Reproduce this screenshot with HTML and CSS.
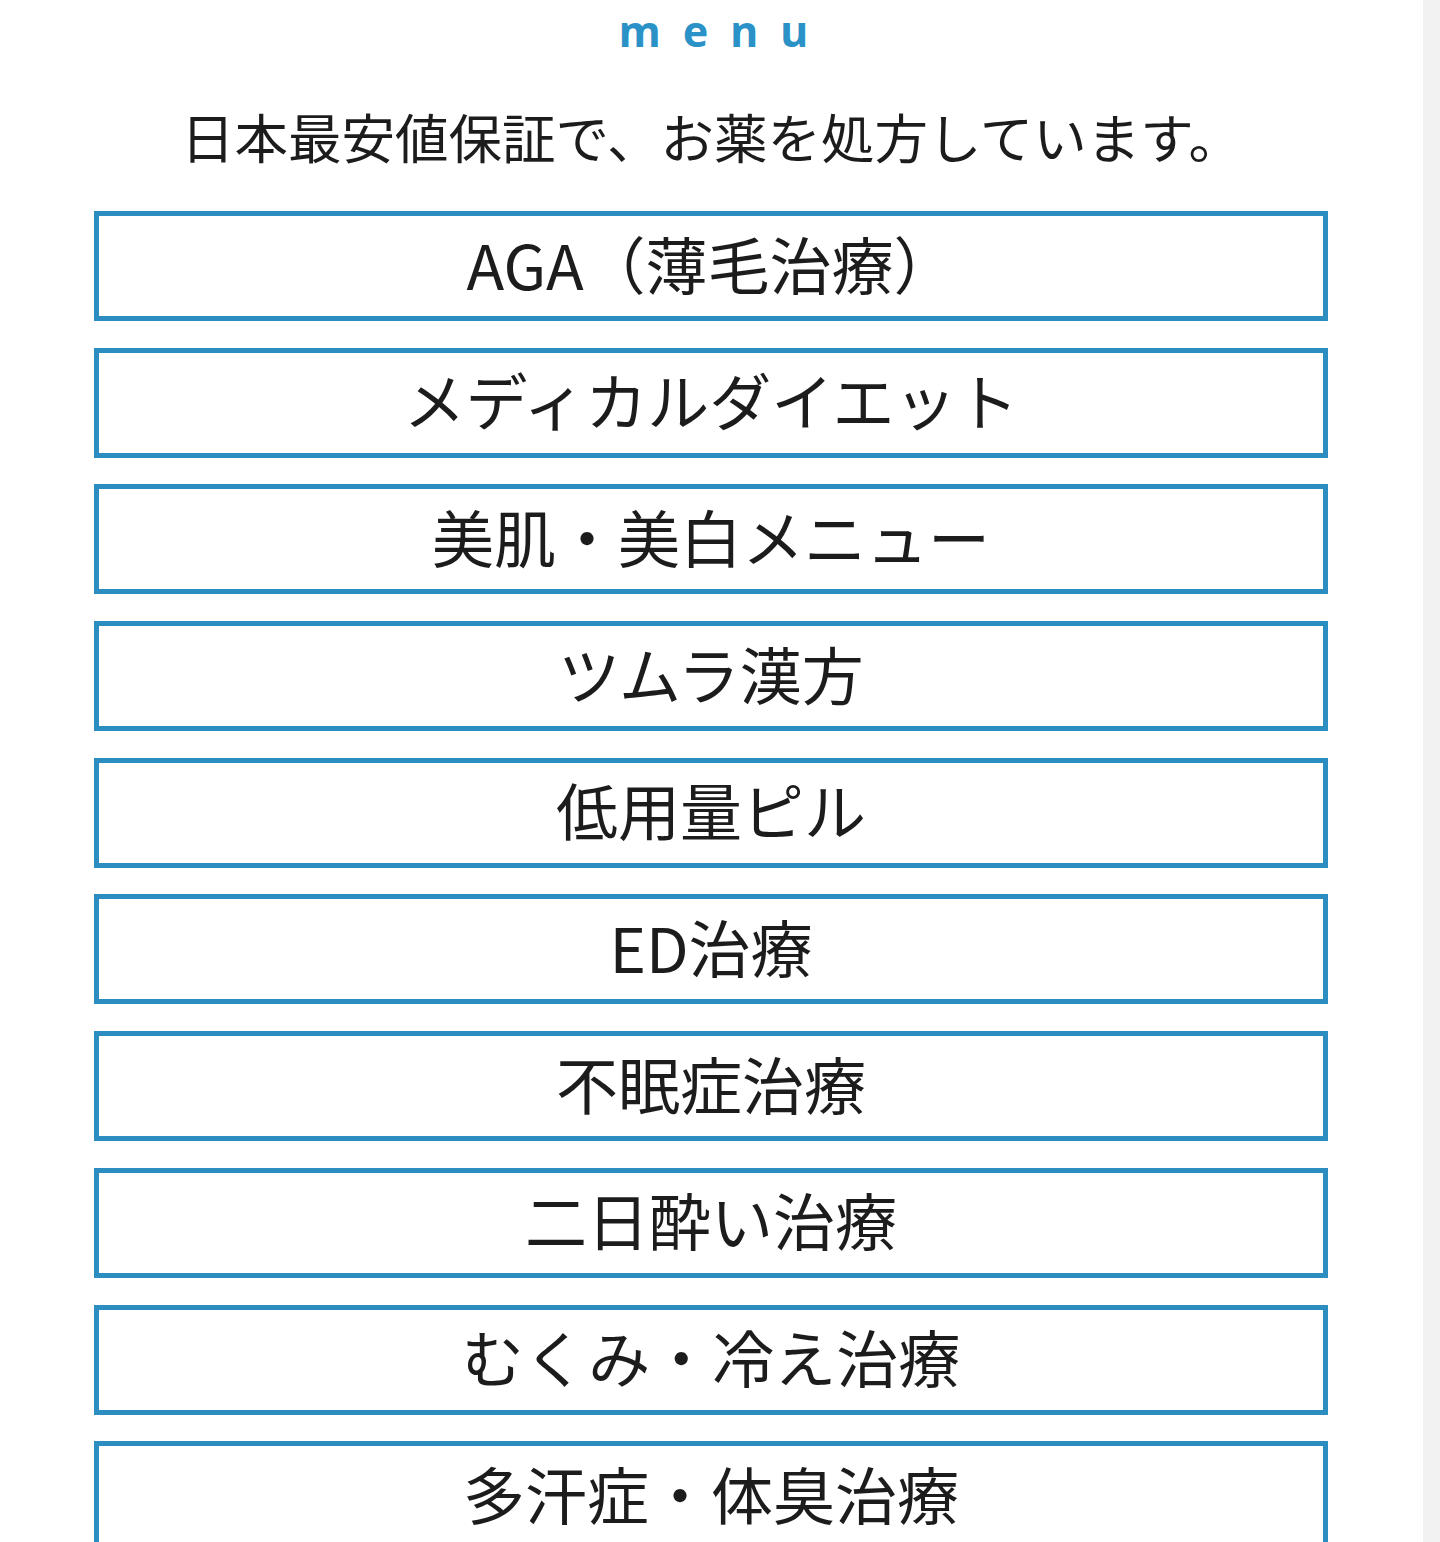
FILE: index.html
```html
<!DOCTYPE html>
<html lang="ja">
<head>
<meta charset="utf-8">
<title>menu</title>
<link rel="stylesheet" href="styles.css">
</head>
<body>
<main class="page">
  <p class="menu-label">menu</p>
  <p class="lead">日本最安値保証で、お薬を処方しています。</p>
  <ul class="menu-list">
    <li class="menu-item">AGA（薄毛治療）</li>
    <li class="menu-item">メディカルダイエット</li>
    <li class="menu-item">美肌・美白メニュー</li>
    <li class="menu-item">ツムラ漢方</li>
    <li class="menu-item">低用量ピル</li>
    <li class="menu-item">ED治療</li>
    <li class="menu-item">不眠症治療</li>
    <li class="menu-item">二日酔い治療</li>
    <li class="menu-item">むくみ・冷え治療</li>
    <li class="menu-item">多汗症・体臭治療</li>
  </ul>
</main>
</body>
</html>
```

FILE: styles.css
```css
html, body {
  margin: 0;
  padding: 0;
}

body {
  background: #f2f2f2;
  font-family: "Noto Sans CJK JP", "Noto Sans", sans-serif;
  color: #1c1c1c;
  height: 1542px;
  overflow: hidden;
}

.page {
  width: 1423px;
  min-height: 1542px;
  background: #ffffff;
  padding-top: 9px;
  box-sizing: border-box;
}

.menu-label {
  margin: 0;
  height: 44px;
  font-family: "Noto Sans", sans-serif;
  font-weight: 700;
  font-size: 43px;
  line-height: 44px;
  letter-spacing: 22px;
  text-indent: 26px;
  text-align: center;
  color: #2b92c8;
}

.lead {
  margin: 56px 0 0;
  font-size: 53.5px;
  line-height: 53px;
  text-align: center;
  color: #1c1c1c;
}

.menu-list {
  list-style: none;
  margin: 49px 0 0;
  padding: 0 95px 0 94px;
  display: flex;
  flex-direction: column;
  gap: 26.7px;
}

.menu-item {
  height: 110px;
  box-sizing: border-box;
  border: 5px solid #2b8dc0;
  padding-bottom: 7px;
  display: flex;
  align-items: center;
  justify-content: center;
  font-size: 62px;
  line-height: 1;
  color: #1c1c1c;
  white-space: nowrap;
}
```
